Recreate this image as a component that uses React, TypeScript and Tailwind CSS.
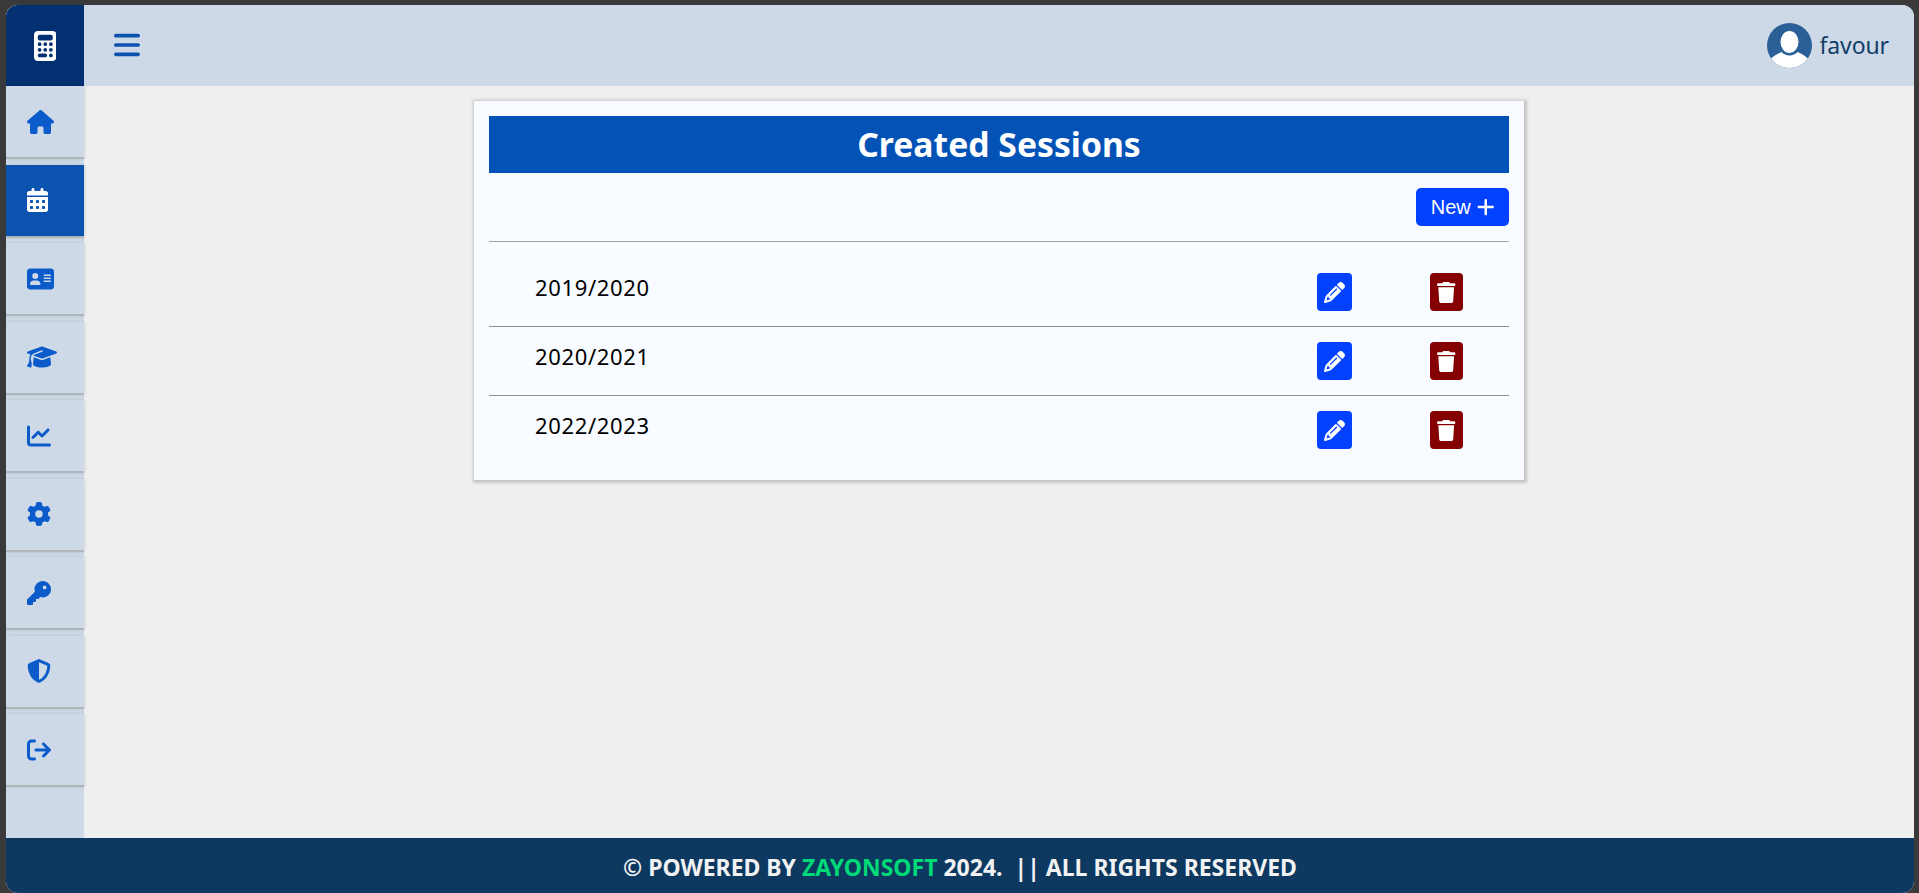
import React from "react";
import {
  FaCalculator, FaHouse, FaCalendarDays, FaAddressCard, FaGraduationCap, FaChartLine, FaGear, FaKey,
  FaShieldHalved, FaArrowRightFromBracket, FaBars, FaPlus, FaPencil, FaTrash,
} from "react-icons/fa6";

const items = [
  { Icon: FaHouse, size: "h-[24px] w-[27px]" },
  { Icon: FaCalendarDays, size: "h-[24px] w-[21px]", active: true },
  { Icon: FaAddressCard, size: "h-[24px] w-[27px]" },
  { Icon: FaGraduationCap, size: "h-[24px] w-[30px]" },
  { Icon: FaChartLine, size: "h-[24px] w-[24px]" },
  { Icon: FaGear, size: "h-[24px] w-[24px]" },
  { Icon: FaKey, size: "h-[24px] w-[24px]" },
  { Icon: FaShieldHalved, size: "h-[24px] w-[24px]" },
  { Icon: FaArrowRightFromBracket, size: "h-[24px] w-[24px]" },
];

const sessions = ["2019/2020", "2020/2021", "2022/2023"];

export default function App() {
  return (
    <div className="h-[893px] w-[1919px] overflow-hidden bg-[#3a3a3a] pt-[5px] pl-[6px] pr-[5px]">
      <div className="flex h-[888px] flex-col overflow-hidden rounded-[12px] bg-[#efefef] font-['Noto_Sans',sans-serif]">
        <header className="flex h-[81px] shrink-0 items-center bg-[#cdd9e6]">
          <div className="flex h-full w-[78px] items-center justify-center bg-[#023070] text-white">
            <FaCalculator className="h-[30px] w-[22.5px]" />
          </div>
          <FaBars className="ml-[30px] mb-[2px] h-[30px] w-[26px] text-[#0c53b0]" />
          <div className="ml-auto flex items-center pr-[25px]">
            <svg viewBox="0 0 45 45" className="h-[45px] w-[45px]">
              <defs>
                <clipPath id="avatar-clip">
                  <circle cx="22.5" cy="22.5" r="22.5" />
                </clipPath>
              </defs>
              <circle cx="22.5" cy="22.5" r="22.5" fill="#2a6097" />
              <ellipse cx="22.5" cy="19" rx="9" ry="11" fill="#fff" />
              <path
                d="M0 45 L0 40 C5 33 12 30 14.5 29 C18 33.5 27 33.5 30.5 29 C33 30 40 33 45 40 L45 45 Z"
                fill="#fff"
                clipPath="url(#avatar-clip)"
              />
            </svg>
            <span className="ml-[7px] text-[23px] leading-none tracking-[-0.1px] text-[#123d69]">favour</span>
          </div>
        </header>
        <div className="flex min-h-0 flex-1">
          <nav className="flex w-[78px] shrink-0 flex-col gap-[5.5px] bg-[#cdd9e6]">
            {items.map(({ Icon, active, size }, i) => (
              <div
                key={i}
                className={`flex h-[73px] shrink-0 items-center border-b-2 border-[#b0b4bb] pl-[21px] shadow-[1px_0_3px_rgba(0,0,0,0.12)] ${
                  active ? "bg-[#0c53b0] text-white" : "bg-[#cdd9e6] text-[#0b5bcb]"
                }`}
              >
                <Icon className={size} />
              </div>
            ))}
          </nav>
          <main className="min-w-0 flex-1 pt-[15px]">
            <section className="mx-auto w-[1050px] bg-[#f8fbff] p-[15px] shadow-[1px_1px_3px_2px_rgba(0,0,0,0.18)]">
              <h1 className="flex h-[57px] items-center justify-center bg-[#0353b7] text-[33.7px] font-bold text-white">
                Created Sessions
              </h1>
              <div className="flex justify-end border-b border-[#a3a3a3] py-[15px]">
                <button className="flex h-[38px] w-[93px] items-center justify-center gap-[6px] rounded-[5px] bg-[#0242ff] font-['Liberation_Sans',sans-serif] text-[20px] text-white">
                  New <FaPlus className="h-[20px] w-[17.5px]" />
                </button>
              </div>
              <div className="pt-[16px]">
                {sessions.map((s, i) => (
                  <div key={s} className={`flex h-[69px] items-center ${i < 2 ? "border-b border-[#8f8f8f]" : "pb-[1px]"}`}>
                    <span className="ml-[46px] mb-[10px] text-[22px] tracking-[0.65px] text-black">{s}</span>
                    <button className="ml-auto mr-[78px] flex h-[38px] w-[35px] items-center justify-center rounded-[4px] bg-[#0242ff] text-white">
                      <FaPencil className="h-[21px] w-[21px]" />
                    </button>
                    <button className="mr-[46px] flex h-[38px] w-[33px] items-center justify-center rounded-[4px] bg-[#850000] text-white">
                      <FaTrash className="h-[21px] w-[18.4px]" />
                    </button>
                  </div>
                ))}
              </div>
            </section>
          </main>
        </div>
        <footer className="flex h-[55px] shrink-0 items-center justify-center bg-[#0d3860] pt-[4px] text-[23px] font-bold text-[#f2f2f2]">
          <span>
            © POWERED BY <span className="text-[#00d978]">ZAYONSOFT</span> 2024. &nbsp;|| ALL RIGHTS RESERVED
          </span>
        </footer>
      </div>
    </div>
  );
}
